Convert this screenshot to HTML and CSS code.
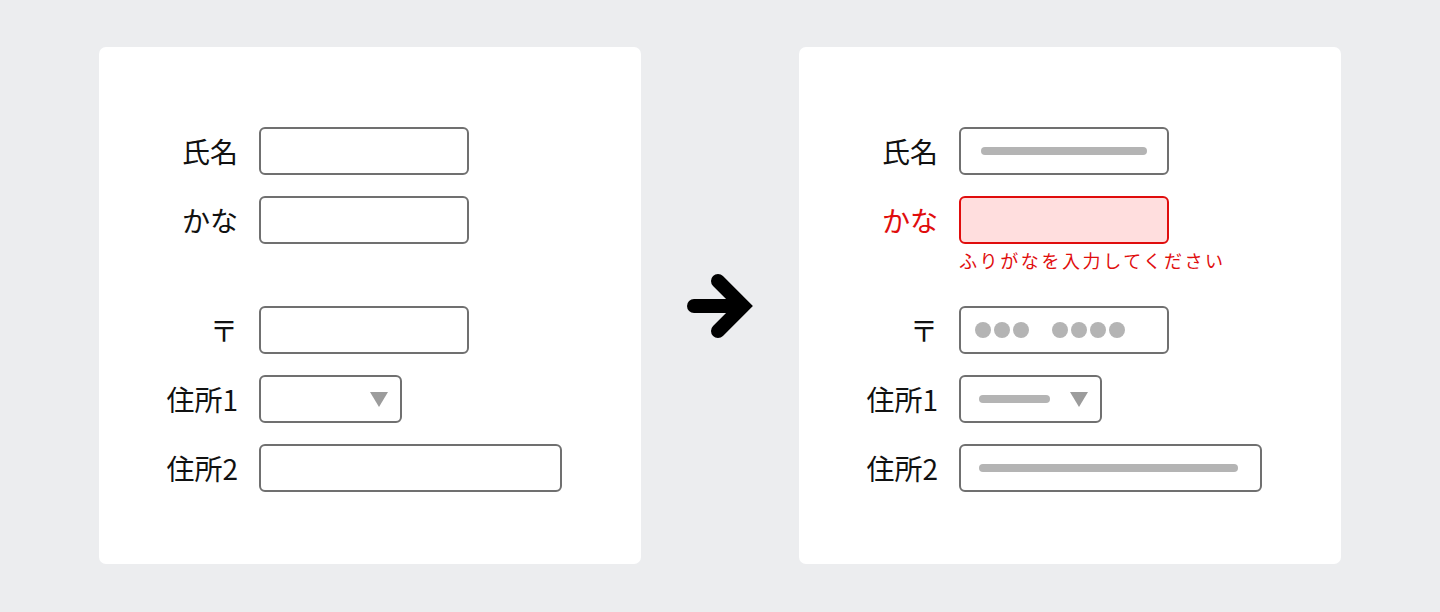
FILE: index.html
```html
<!DOCTYPE html>
<html lang="ja">
<head>
    <meta charset="UTF-8">
    <meta name="viewport" content="width=device-width, initial-scale=1.0">
    <title>フォーム入力例</title>
    <link rel="stylesheet" href="styles.css">
</head>
<body>
    <main class="compare">
        <!-- before -->
        <section class="card">
            <div class="form">
                <div class="row">
                    <span class="label">氏名</span>
                    <div class="box box-m"></div>
                </div>
                <div class="row">
                    <span class="label">かな</span>
                    <div class="box box-m"></div>
                </div>
                <div class="note"></div>
                <div class="row">
                    <span class="label">〒</span>
                    <div class="box box-m"></div>
                </div>
                <div class="row">
                    <span class="label">住所1</span>
                    <div class="box box-s select">
                        <span class="caret"></span>
                    </div>
                </div>
                <div class="row">
                    <span class="label">住所2</span>
                    <div class="box box-l"></div>
                </div>
            </div>
        </section>

        <div class="arrow">
            <svg width="66" height="66" viewBox="0 0 66 66">
                <path d="M7 33 H54" stroke="#000" stroke-width="14" stroke-linecap="round" fill="none"/>
                <path d="M31 8 L56 33 L31 58" stroke="#000" stroke-width="14" stroke-linecap="round" stroke-linejoin="miter" fill="none"/>
            </svg>
        </div>

        <!-- after -->
        <section class="card">
            <div class="form">
                <div class="row">
                    <span class="label">氏名</span>
                    <div class="box box-m">
                        <span class="bar bar-name"></span>
                    </div>
                </div>
                <div class="row">
                    <span class="label error">かな</span>
                    <div class="box box-m box-error"></div>
                </div>
                <div class="note">ふりがなを入力してください</div>
                <div class="row">
                    <span class="label">〒</span>
                    <div class="box box-m dots">
                        <span class="dot"></span><span class="dot"></span><span class="dot"></span>
                        <span class="dot-gap"></span>
                        <span class="dot"></span><span class="dot"></span><span class="dot"></span><span class="dot"></span>
                    </div>
                </div>
                <div class="row">
                    <span class="label">住所1</span>
                    <div class="box box-s select">
                        <span class="bar bar-pref"></span>
                        <span class="caret"></span>
                    </div>
                </div>
                <div class="row">
                    <span class="label">住所2</span>
                    <div class="box box-l">
                        <span class="bar bar-addr"></span>
                    </div>
                </div>
            </div>
        </section>
    </main>
</body>
</html>
```

FILE: styles.css
```css
body {
    margin: 0;
    padding: 0;
    background-color: #ecedef;
    font-family: "Noto Sans CJK JP", "Noto Sans", sans-serif;
    color: #111;
}

.compare {
    height: 612px;
    box-sizing: border-box;
    padding-top: 47px;
    display: flex;
    justify-content: center;
    align-items: flex-start;
}

.card {
    width: 542px;
    height: 517px;
    box-sizing: border-box;
    padding-top: 80px;
    background-color: #fff;
    border-radius: 7px;
}

.arrow {
    width: 158px;
    height: 517px;
    display: flex;
    justify-content: center;
    align-items: center;
}

.arrow svg {
    display: block;
}

.form {
    display: flex;
    flex-direction: column;
    gap: 21px;
}

.row {
    display: flex;
    align-items: center;
    gap: 21px;
}

.label {
    width: 139px;
    text-align: right;
    font-size: 28px;
    line-height: 48px;
}

.label.error {
    color: #e00d0d;
}

.box {
    height: 48px;
    box-sizing: border-box;
    border: 2px solid #707070;
    border-radius: 6px;
    background-color: #fff;
    display: flex;
    align-items: center;
    padding-left: 18px;
}

.box-m {
    width: 210px;
}

.box-s {
    width: 143px;
}

.box-l {
    width: 303px;
}

.box-error {
    border-color: #e00d0d;
    background-color: #ffdede;
}

.note {
    margin: -15px 0 0 160px;
    height: 35px;
    font-size: 18px;
    line-height: 20px;
    letter-spacing: 2.6px;
    color: #e00d0d;
}

.bar {
    height: 8px;
    border-radius: 4px;
    background-color: #b4b4b4;
}

.bar-name {
    width: 166px;
    margin-left: 2px;
}

.bar-pref {
    width: 71px;
}

.bar-addr {
    width: 259px;
}

.dots {
    padding-left: 14px;
    gap: 3px;
}

.dot {
    width: 16px;
    height: 16px;
    border-radius: 50%;
    background-color: #b4b4b4;
}

.dot-gap {
    width: 17px;
}

.select {
    justify-content: space-between;
    padding-right: 12px;
}

.caret {
    margin-left: auto;
    width: 0;
    height: 0;
    border-left: 9px solid transparent;
    border-right: 9px solid transparent;
    border-top: 15px solid #9c9c9c;
}
```
